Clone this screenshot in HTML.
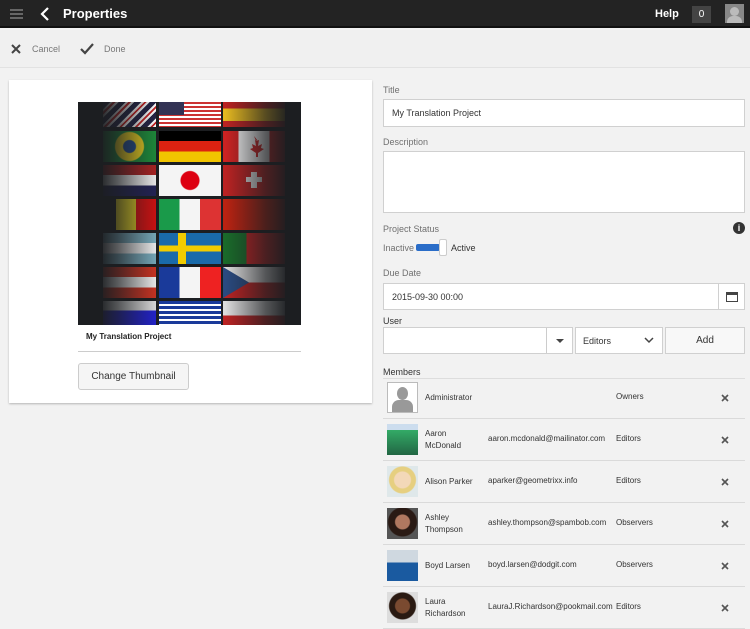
<!DOCTYPE html>
<html><head><meta charset="utf-8"><style>
*{box-sizing:border-box;margin:0;padding:0}
body{width:750px;height:625px;overflow:hidden;background:#f2f2f2;font-family:"Liberation Sans",sans-serif;font-size:9px;color:#333;position:relative}
.abs{position:absolute}
.top{left:0;top:0;width:750px;height:28px;background:#232323;border-bottom:2px solid #111}
.tool{left:0;top:30px;width:750px;height:38px;background:#f0f0f0;border-bottom:1px solid #e2e2e2}
.card{left:9px;top:80px;width:363px;height:323px;background:#fff;box-shadow:0 1px 2px rgba(0,0,0,.25)}
.lbl{color:#707070;font-size:9px}
.inp{background:#fff;border:1px solid #d0d0d0}
.f{position:absolute}
.row{position:absolute;left:383px;width:362px;height:42px;border-bottom:1px solid #dadada}
.row .av{position:absolute;left:4px;top:5px;width:31px;height:31px}
.row .n{position:absolute;left:42px;top:0;height:41px;display:flex;align-items:center;font-size:8px;line-height:12px;width:60px}
.row .e{position:absolute;left:105px;top:15px;font-size:8px}
.row .r{position:absolute;left:233px;top:15px;font-size:8px}
.row .x{position:absolute;left:338px;top:17px}
</style></head><body>
<div class="abs top">
 <div class="abs" style="left:10px;top:9px;width:13px;height:2px;background:#666;box-shadow:0 4px 0 #666,0 8px 0 #666"></div>
 <svg class="abs" style="left:40px;top:7px" width="10" height="14"><path d="M8 1L2 7l6 6" stroke="#fff" stroke-width="2.2" fill="none"/></svg>
 <div class="abs" style="left:63px;top:6px;color:#fff;font-size:13px;font-weight:bold">Properties</div>
 <div class="abs" style="left:655px;top:8px;color:#fff;font-size:11px;font-weight:bold">Help</div>
 <div class="abs" style="left:692px;top:6px;width:19px;height:17px;background:#444;color:#fff;font-size:10px;text-align:center;line-height:17px">0</div>
 <div class="abs" style="left:725px;top:4px;width:19px;height:19px;background:#888"><div class="abs" style="left:5px;top:3px;width:9px;height:9px;border-radius:50%;background:#bbb"></div><div class="abs" style="left:2px;top:12px;width:15px;height:7px;border-radius:6px 6px 0 0;background:#bbb"></div></div>
</div>
<div class="abs tool">
 <svg class="abs" style="left:11px;top:14px" width="10" height="10"><path d="M1 1l8 8M9 1l-8 8" stroke="#444" stroke-width="2"/></svg>
 <div class="abs" style="left:32px;top:14px;color:#777">Cancel</div>
 <svg class="abs" style="left:80px;top:13px" width="14" height="12"><path d="M1 6l4 4 8-9" stroke="#444" stroke-width="2.2" fill="none"/></svg>
 <div class="abs" style="left:104px;top:14px;color:#777">Done</div>
</div>
<div class="abs card"></div>
<div class="abs" style="left:78px;top:102px;width:223px;height:223px;background:#1c1e21;overflow:hidden">
 <div class="f" style="left:25px;top:0;width:53px;height:25px;background:repeating-linear-gradient(135deg,#224 0 5px,#fff 5px 7px,#c22 7px 9px,#fff 9px 11px)"></div>
 <div class="f" style="left:81px;top:0;width:62px;height:25px;background:repeating-linear-gradient(#c33 0 2px,#fff 2px 4px)"></div>
 <div class="f" style="left:81px;top:0;width:25px;height:13px;background:#335"></div>
 <div class="f" style="left:145px;top:0;width:62px;height:25px;background:linear-gradient(#b22 0 25%,#e5b820 25% 75%,#b22 75%)"></div>
 <div class="f" style="left:25px;top:29px;width:53px;height:31px;background:radial-gradient(circle,#224a8a 0 6px,#e5cc20 7px 14px,#1d8a3a 15px)"></div>
 <div class="f" style="left:81px;top:29px;width:62px;height:31px;background:linear-gradient(#000 0 33%,#d21 33% 66%,#f1c400 66%)"></div>
 <div class="f" style="left:145px;top:29px;width:62px;height:31px;background:linear-gradient(90deg,#c22 0 25%,#eee 25% 75%,#c22 75%)"></div>
 <svg class="f" style="left:166px;top:33px" width="20" height="24"><path d="M10 1l2 5 3-1-1 6 4-2-1 4 3 1-6 4v4h-2v-4l-6-4 3-1-1-4 4 2-1-6 3 1z" fill="#c22"/></svg>
 <div class="f" style="left:25px;top:63px;width:53px;height:31px;background:linear-gradient(#a22 0 33%,#eee 33% 66%,#225 66%)"></div>
 <div class="f" style="left:81px;top:63px;width:62px;height:31px;background:radial-gradient(circle,#d01 0 9px,#f4f4f4 10px)"></div>
 <div class="f" style="left:145px;top:63px;width:62px;height:31px;background:#b22"></div>
 <div class="f" style="left:168px;top:75px;width:16px;height:5px;background:#ddd"></div><div class="f" style="left:173px;top:70px;width:6px;height:16px;background:#ddd"></div>
 <div class="f" style="left:38px;top:97px;width:40px;height:31px;background:linear-gradient(90deg,#dc2 0 50%,#c11 50%)"></div>
 <div class="f" style="left:81px;top:97px;width:62px;height:31px;background:linear-gradient(90deg,#1a9a4a 0 33%,#f4f4f4 33% 66%,#d33 66%)"></div>
 <div class="f" style="left:145px;top:97px;width:62px;height:31px;background:#b21"></div>
 <div class="f" style="left:25px;top:131px;width:53px;height:31px;background:linear-gradient(#7ab 0 33%,#eee 33% 66%,#7ab 66%)"></div>
 <div class="f" style="left:81px;top:131px;width:62px;height:31px;background:linear-gradient(#1a6aaa 0 40%,#f2cc00 40% 60%,#1a6aaa 60%)"></div>
 <div class="f" style="left:100px;top:131px;width:8px;height:31px;background:#f2cc00"></div>
 <div class="f" style="left:145px;top:131px;width:62px;height:31px;background:linear-gradient(90deg,#1a6a2a 0 38%,#b22 38%)"></div>
 <div class="f" style="left:25px;top:165px;width:53px;height:31px;background:linear-gradient(#c32 0 33%,#eee 33% 66%,#c32 66%)"></div>
 <div class="f" style="left:81px;top:165px;width:62px;height:31px;background:linear-gradient(90deg,#1a3a9a 0 33%,#f4f4f4 33% 66%,#e22 66%)"></div>
 <div class="f" style="left:145px;top:165px;width:62px;height:31px;background:linear-gradient(#ddd 0 50%,#b22 50%)"></div>
 <svg class="f" style="left:145px;top:165px" width="30" height="31"><path d="M0 0L26 15.5 0 31z" fill="#2a4a80"/></svg>
 <div class="f" style="left:25px;top:199px;width:53px;height:24px;background:linear-gradient(#ddd 0 40%,#22c 40%)"></div>
 <div class="f" style="left:81px;top:199px;width:62px;height:24px;background:repeating-linear-gradient(#1a3a9a 0 3px,#fff 3px 5px)"></div>
 <div class="f" style="left:145px;top:199px;width:62px;height:24px;background:linear-gradient(#ddd 0 60%,#b22 60%)"></div>
 <div class="f" style="left:0;top:0;width:223px;height:223px;background:linear-gradient(90deg,#1c1e21 0,#1c1e21 9%,rgba(28,30,33,.7) 18%,rgba(28,30,33,0) 36%,rgba(28,30,33,0) 66%,rgba(28,30,33,.7) 84%,#1c1e21 95%)"></div>
</div>
<div class="abs" style="left:78px;top:325px;width:223px;height:27px;background:#fff;border-bottom:1px solid #ccc;font-weight:bold;font-size:8px;padding:7px 8px;color:#222">My Translation Project</div>
<div class="abs" style="left:78px;top:363px;width:111px;height:27px;background:#f5f5f5;border:1px solid #ccc;border-radius:3px;text-align:center;line-height:25px;font-size:10px;color:#333">Change Thumbnail</div>

<div class="abs lbl" style="left:383px;top:85px">Title</div>
<div class="abs inp" style="left:383px;top:99px;width:362px;height:28px;padding:8px;font-size:9px">My Translation Project</div>
<div class="abs lbl" style="left:383px;top:137px">Description</div>
<div class="abs inp" style="left:383px;top:151px;width:362px;height:62px"></div>
<div class="abs lbl" style="left:383px;top:224px">Project Status</div>
<div class="abs" style="left:733px;top:222px;width:12px;height:12px;border-radius:50%;background:#333;color:#fff;font-size:9px;text-align:center;line-height:12px;font-weight:bold">i</div>
<div class="abs lbl" style="left:383px;top:243px">Inactive</div>
<div class="abs" style="left:416px;top:244px;width:24px;height:7px;background:#2a6dc8;border-radius:2px"></div>
<div class="abs" style="left:439px;top:239px;width:8px;height:17px;background:#fff;border:1px solid #ccc;border-radius:2px"></div>
<div class="abs" style="left:451px;top:243px;font-size:9px">Active</div>
<div class="abs lbl" style="left:383px;top:268px">Due Date</div>
<div class="abs inp" style="left:383px;top:283px;width:336px;height:27px;padding:8px;font-size:9px">2015-09-30 00:00</div>
<div class="abs inp" style="left:718px;top:283px;width:27px;height:27px"><div class="abs" style="left:7px;top:8px;width:12px;height:10px;border:1.5px solid #444;border-top-width:3px"></div></div>
<div class="abs" style="left:383px;top:316px;font-size:9px">User</div>
<div class="abs inp" style="left:383px;top:327px;width:190px;height:27px"></div>
<div class="abs" style="left:546px;top:328px;width:1px;height:25px;background:#ccc"></div>
<div class="abs" style="left:556px;top:339px;border:4px solid transparent;border-top:4px solid #444"></div>
<div class="abs inp" style="left:575px;top:327px;width:88px;height:27px;padding:8px 7px;font-size:9px">Editors</div>
<svg class="abs" style="left:644px;top:337px" width="10" height="7"><path d="M1 1l4 4 4-4" stroke="#444" stroke-width="1.5" fill="none"/></svg>
<div class="abs inp" style="left:665px;top:327px;width:80px;height:27px;text-align:center;line-height:25px;font-size:10px;background:#f8f8f8">Add</div>
<div class="abs" style="left:383px;top:367px;font-size:9px">Members</div>
<div class="abs" style="left:383px;top:378px;width:362px;height:1px;background:#ddd"></div>

<div class="row" style="top:377px"><div class="av" style="background:#fff;border:1px solid #bbb"><div class="abs" style="left:9px;top:4px;width:11px;height:13px;border-radius:50%;background:#999"></div><div class="abs" style="left:4px;top:17px;width:21px;height:12px;border-radius:7px 7px 0 0;background:#999"></div></div><div class="n">Administrator</div><div class="r">Owners</div><svg class="x" width="8" height="8"><path d="M1 1l6 6M7 1l-6 6" stroke="#555" stroke-width="1.6"/></svg></div>
<div class="row" style="top:419px"><div class="av" style="background:linear-gradient(#cde 0 20%,#3a6 20%,#264 100%)"></div><div class="n">Aaron<br>McDonald</div><div class="e">aaron.mcdonald@mailinator.com</div><div class="r">Editors</div><svg class="x" width="8" height="8"><path d="M1 1l6 6M7 1l-6 6" stroke="#555" stroke-width="1.6"/></svg></div>
<div class="row" style="top:461px"><div class="av" style="background:radial-gradient(circle at 50% 45%,#f3d8b8 0 8px,#e6cf80 9px 13px,#dfe8ea 14px)"></div><div class="n">Alison Parker</div><div class="e">aparker@geometrixx.info</div><div class="r">Editors</div><svg class="x" width="8" height="8"><path d="M1 1l6 6M7 1l-6 6" stroke="#555" stroke-width="1.6"/></svg></div>
<div class="row" style="top:503px"><div class="av" style="background:radial-gradient(circle at 50% 45%,#b07860 0 7px,#2a1a14 8px 14px,#555 15px)"></div><div class="n">Ashley<br>Thompson</div><div class="e">ashley.thompson@spambob.com</div><div class="r">Observers</div><svg class="x" width="8" height="8"><path d="M1 1l6 6M7 1l-6 6" stroke="#555" stroke-width="1.6"/></svg></div>
<div class="row" style="top:545px"><div class="av" style="background:linear-gradient(#cfd8e0 0 40%,#1a5aa0 40%)"></div><div class="n">Boyd Larsen</div><div class="e">boyd.larsen@dodgit.com</div><div class="r">Observers</div><svg class="x" width="8" height="8"><path d="M1 1l6 6M7 1l-6 6" stroke="#555" stroke-width="1.6"/></svg></div>
<div class="row" style="top:587px"><div class="av" style="background:radial-gradient(circle at 50% 45%,#7a4a30 0 7px,#2a1a12 8px 13px,#ddd 14px)"></div><div class="n">Laura<br>Richardson</div><div class="e">LauraJ.Richardson@pookmail.com</div><div class="r">Editors</div><svg class="x" width="8" height="8"><path d="M1 1l6 6M7 1l-6 6" stroke="#555" stroke-width="1.6"/></svg></div>
</body></html>
